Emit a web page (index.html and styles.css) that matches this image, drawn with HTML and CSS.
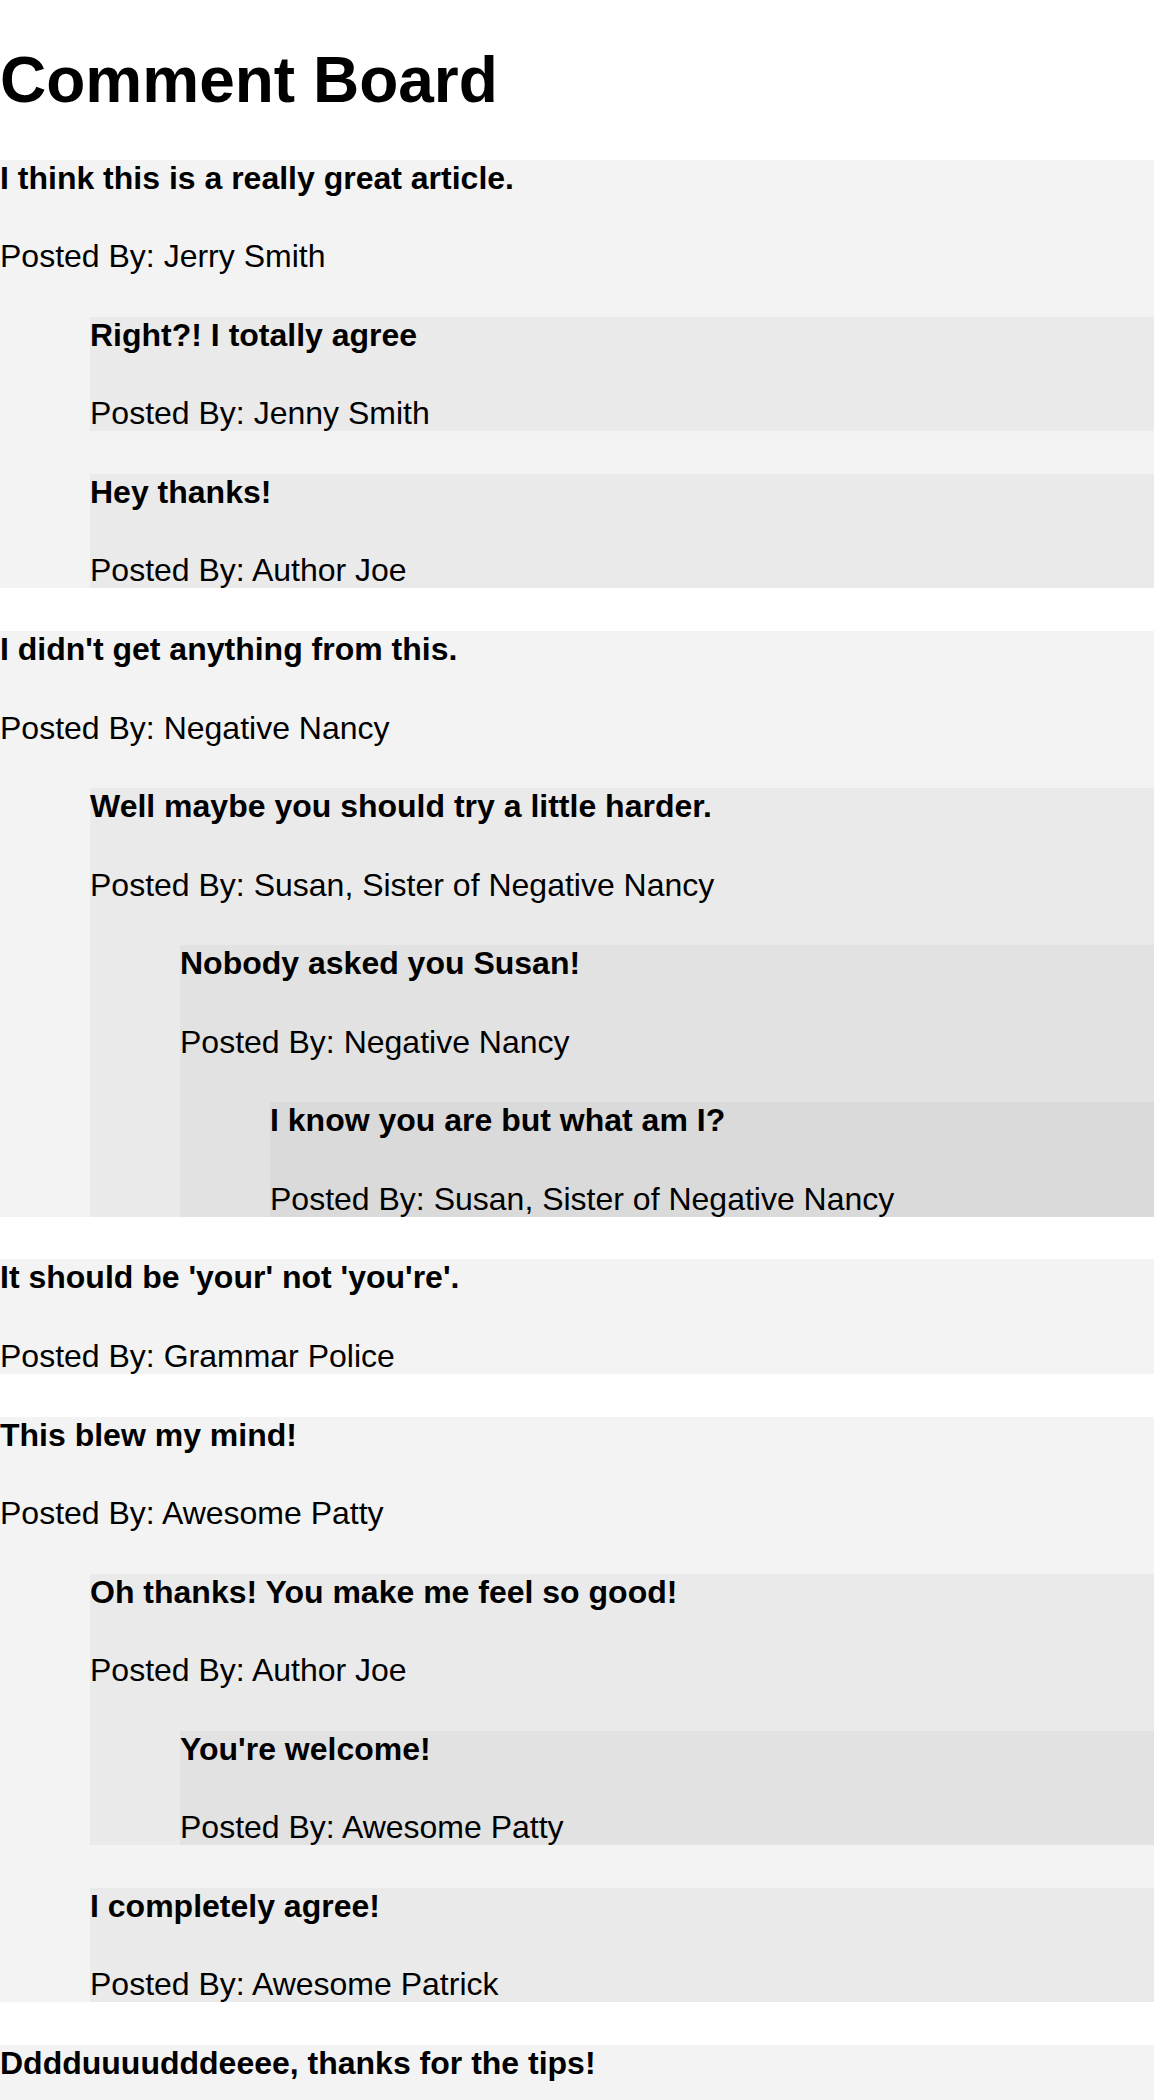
FILE: index.html
```html
<!DOCTYPE html>
<html lang="en">
<head>
<meta charset="utf-8">
<title>Comment Board</title>
<link rel="stylesheet" href="styles.css">
</head>
<body>
<h1 class="title">Comment Board</h1>

<div class="comment">
  <h4 class="comment-text">I think this is a really great article.</h4>
  <p class="comment-author">Posted By: Jerry Smith</p>
  <div class="comment">
    <h4 class="comment-text">Right?! I totally agree</h4>
    <p class="comment-author">Posted By: Jenny Smith</p>
  </div>
  <div class="comment">
    <h4 class="comment-text">Hey thanks!</h4>
    <p class="comment-author">Posted By: Author Joe</p>
  </div>
</div>

<div class="comment">
  <h4 class="comment-text">I didn't get anything from this.</h4>
  <p class="comment-author">Posted By: Negative Nancy</p>
  <div class="comment">
    <h4 class="comment-text">Well maybe you should try a little harder.</h4>
    <p class="comment-author">Posted By: Susan, Sister of Negative Nancy</p>
    <div class="comment">
      <h4 class="comment-text">Nobody asked you Susan!</h4>
      <p class="comment-author">Posted By: Negative Nancy</p>
      <div class="comment">
        <h4 class="comment-text">I know you are but what am I?</h4>
        <p class="comment-author">Posted By: Susan, Sister of Negative Nancy</p>
      </div>
    </div>
  </div>
</div>

<div class="comment">
  <h4 class="comment-text">It should be 'your' not 'you're'.</h4>
  <p class="comment-author">Posted By: Grammar Police</p>
</div>

<div class="comment">
  <h4 class="comment-text">This blew my mind!</h4>
  <p class="comment-author">Posted By: Awesome Patty</p>
  <div class="comment">
    <h4 class="comment-text">Oh thanks! You make me feel so good!</h4>
    <p class="comment-author">Posted By: Author Joe</p>
    <div class="comment">
      <h4 class="comment-text">You're welcome!</h4>
      <p class="comment-author">Posted By: Awesome Patty</p>
    </div>
  </div>
  <div class="comment">
    <h4 class="comment-text">I completely agree!</h4>
    <p class="comment-author">Posted By: Awesome Patrick</p>
  </div>
</div>

<div class="comment">
  <h4 class="comment-text">Dddduuuudddeeee, thanks for the tips!</h4>
  <p class="comment-author">Posted By: Captain Obvious</p>
</div>
</body>
</html>
```
FILE: styles.css
```css
html, body {
  background: #ffffff;
}
body {
  margin: 0;
  font-family: "Liberation Sans", Arial, Helvetica, sans-serif;
  font-size: 32px;
  color: #000000;
}
.title {
  font-size: 64px;
  font-weight: bold;
  margin: 42.88px 0;
}
.comment {
  background: #f3f3f3;
}
.comment .comment {
  margin-left: 90px;
  background: #eaeaea;
}
.comment .comment .comment {
  background: #e2e2e2;
}
.comment .comment .comment .comment {
  background: #dadada;
}
.comment-text {
  font-size: 32px;
  font-weight: bold;
  line-height: 36px;
  margin: 42.56px 0;
}
.comment-author {
  line-height: 36px;
  margin: 32px 0;
}
```
